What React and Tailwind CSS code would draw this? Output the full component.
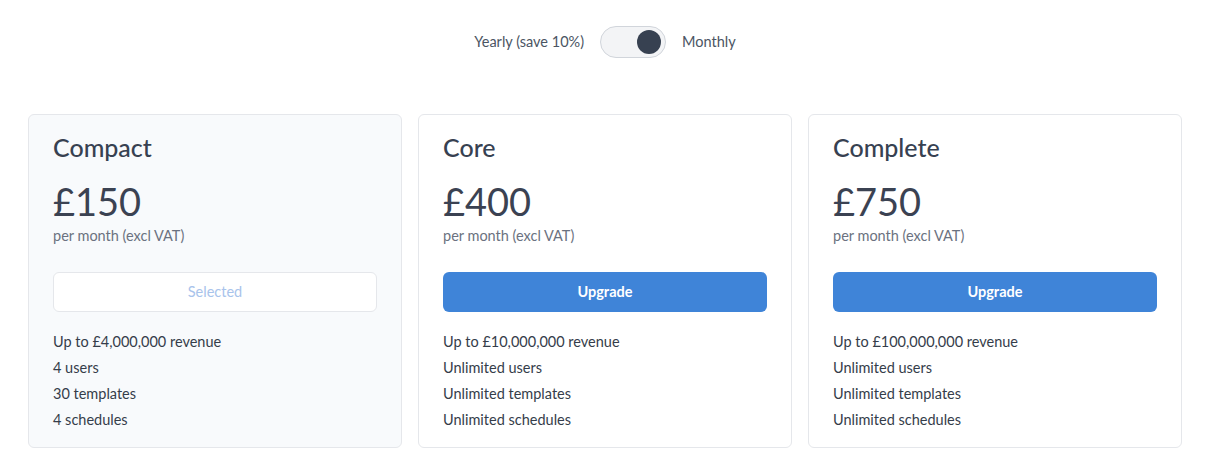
import React, { useState } from "react";

const plans = [
  {
    name: "Compact",
    price: "£150",
    selected: true,
    features: ["Up to £4,000,000 revenue", "4 users", "30 templates", "4 schedules"],
  },
  {
    name: "Core",
    price: "£400",
    selected: false,
    features: ["Up to £10,000,000 revenue", "Unlimited users", "Unlimited templates", "Unlimited schedules"],
  },
  {
    name: "Complete",
    price: "£750",
    selected: false,
    features: ["Up to £100,000,000 revenue", "Unlimited users", "Unlimited templates", "Unlimited schedules"],
  },
];

export default function App() {
  const [monthly, setMonthly] = useState(true);
  return (
    <div
      className="w-[1210px] h-[452px] bg-white text-[#374151]"
      style={{ fontFamily: "Lato, 'Noto Sans', sans-serif" }}
    >
      <div className="flex items-center justify-center gap-4 pt-[26px] text-[14.5px] text-[#4b5563]">
        <span>Yearly (save 10%)</span>
        <button
          onClick={() => setMonthly(!monthly)}
          className={`flex h-8 w-[66px] items-center rounded-full border border-[#d1d5db] bg-[#f3f4f6] px-[4px] ${monthly ? "justify-end" : "justify-start"}`}
        >
          <span className="block h-6 w-6 rounded-full bg-[#374151]" />
        </button>
        <span>Monthly</span>
      </div>

      <div className="mt-[56px] grid grid-cols-3 gap-4 px-[28px]">
        {plans.map((p) => (
          <div
            key={p.name}
            className={`rounded-md border border-[#e5e7eb] px-6 pt-4 pb-[14px] ${p.selected ? "bg-[#f8fafc]" : "bg-white"}`}
          >
            <h2 className="text-[25px] leading-8 font-medium text-[#374151]">{p.name}</h2>
            <div className="mt-[19px] text-[38px] leading-none text-[#3b4252]">{p.price}</div>
            <div className="mt-[6px] text-[14.5px] leading-5 text-[#6b7280]">per month (excl VAT)</div>
            {p.selected ? (
              <button className="mt-[26px] h-10 w-full rounded-md border border-[#e5e7eb] bg-white text-[14.5px] text-[#a8c3eb]">
                Selected
              </button>
            ) : (
              <button className="mt-[26px] h-10 w-full rounded-md bg-[#3f84d8] text-[14.5px] font-bold text-white">
                Upgrade
              </button>
            )}
            <ul className="mt-[17px] text-[14.5px] leading-[26px] text-[#353d4a]">
              {p.features.map((f) => (
                <li key={f}>{f}</li>
              ))}
            </ul>
          </div>
        ))}
      </div>
    </div>
  );
}
